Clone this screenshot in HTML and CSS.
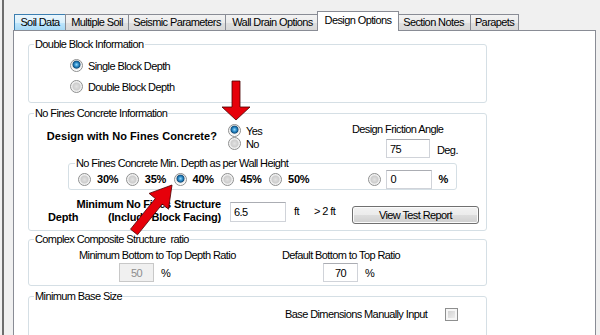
FILE: index.html
```html
<!DOCTYPE html>
<html lang="en">
<head>
<meta charset="utf-8">
<title>Design Options</title>
<link rel="stylesheet" href="styles.css">
</head>
<body>
<div class="window">
  <div class="tabs">
    <div class="tab hot t-soil">Soil Data</div>
    <div class="tab t-multi">Multiple Soil</div>
    <div class="tab t-seis">Seismic Parameters</div>
    <div class="tab t-wall">Wall Drain Options</div>
    <div class="tab selected t-design">Design Options</div>
    <div class="tab t-notes">Section Notes</div>
    <div class="tab t-para">Parapets</div>
  </div>
  <div class="panel">
    <section class="group g-double">
      <div class="group-title">Double Block Information</div>
      <div class="opt-list">
        <div class="opt"><span class="radio checked"></span><span>Single Block Depth</span></div>
        <div class="opt"><span class="radio"></span><span>Double Block Depth</span></div>
      </div>
    </section>

    <section class="group g-nofines">
      <div class="group-title">No Fines Concrete Information</div>
      <div class="row-design">
        <div class="q-label b">Design with No Fines Concrete?</div>
        <div class="yn">
          <div class="yn-opt"><span class="radio checked"></span><span>Yes</span></div>
          <div class="yn-opt"><span class="radio"></span><span>No</span></div>
        </div>
        <div class="friction">
          <div class="friction-label">Design Friction Angle</div>
          <div class="friction-row"><input class="input w-75" type="text" value="75" readonly><span class="unit-deg">Deg.</span></div>
        </div>
      </div>
      <section class="group sub">
        <div class="group-title">No Fines Concrete Min. Depth as per Wall Height</div>
        <div class="pct-row">
          <div class="pct"><span class="radio"></span><span class="b">30%</span></div>
          <div class="pct"><span class="radio"></span><span class="b">35%</span></div>
          <div class="pct"><span class="radio checked"></span><span class="b">40%</span></div>
          <div class="pct"><span class="radio"></span><span class="b">45%</span></div>
          <div class="pct"><span class="radio"></span><span class="b">50%</span></div>
          <div class="pct-custom"><span class="radio"></span><input class="input w-0" type="text" value="0" readonly><span class="b pct-sign">%</span></div>
        </div>
      </section>
      <div class="row-depth">
        <div class="depth-label b">
          <div>Minimum No Fines Structure</div>
          <div class="l2"><span>Depth</span><span>(Include Block Facing)</span></div>
        </div>
        <input class="input w-65" type="text" value="6.5" readonly>
        <span class="unit-ft">ft</span>
        <span class="min-ft">&gt; 2 ft</span>
        <button class="btn" type="button">View Test Report</button>
      </div>
    </section>

    <section class="group g-composite">
      <div class="group-title">Complex Composite Structure&nbsp; ratio</div>
      <div class="comp-row">
        <div class="comp-col1">
          <div class="comp-label">Minimum Bottom to Top Depth Ratio</div>
          <div class="comp-inputs"><input class="input w-ratio disabled" type="text" value="50" disabled><span class="pct-unit">%</span></div>
        </div>
        <div class="comp-col2">
          <div class="comp-label">Default Bottom to Top Ratio</div>
          <div class="comp-inputs"><input class="input w-ratio" type="text" value="70" readonly><span class="pct-unit">%</span></div>
        </div>
      </div>
    </section>

    <section class="group g-base">
      <div class="group-title">Minimum Base Size</div>
      <div class="base-row">
        <span class="base-text">Base Dimensions Manually Input</span>
        <span class="checkbox"></span>
      </div>
    </section>
  </div>
</div>
<svg class="arrows" width="600" height="335" viewBox="0 0 600 335" aria-hidden="true">
  <polygon points="232,81 240,81 240,107 250,107 236,120 222,107 232,107" fill="#e6000a" stroke="#4a0000" stroke-width="0.8"/>
  <polygon points="172,185 168.5,209.2 162.3,204.1 137.5,234.8 130.5,229.2 155.3,198.5 149.1,193.4" fill="#e6000a" stroke="#4a0000" stroke-width="0.8"/>
</svg>
</body>
</html>
```

FILE: styles.css
```css
* { box-sizing: border-box; }
html, body { margin: 0; padding: 0; }
body {
  position: relative;
  width: 600px;
  height: 335px;
  overflow: hidden;
  background: #f0f0f0;
  font-family: "Liberation Sans", Arial, sans-serif;
  font-size: 11px;
  letter-spacing: -0.6px;
  color: #000;
}
.b { font-weight: bold; letter-spacing: -0.2px; }

.window {
  margin-left: 2px;
  border-left: 2px solid #6d6d6d;
  height: 335px;
  padding: 11px 0 0 9px;
  background: #f0f0f0;
}

/* tabs */
.tabs { display: flex; align-items: flex-end; height: 20px; }
.tab {
  position: relative;
  height: 16px;
  margin: 0 -1px 1px 0;
  border: 1px solid #898c95;
  border-bottom: none;
  background: linear-gradient(#f3f3f3, #ebebeb 50%, #dfdfdf 51%, #d8d8d8);
  line-height: 15px;
  text-align: center;
  white-space: nowrap;
}
.tab.hot {
  border-color: #3c7fb1;
  background: linear-gradient(#eaf6fd, #d9f0fc 50%, #bee6fd 51%, #a7d9f5);
}
.t-soil { margin-left: 1px; width: 52px; }
.t-multi { width: 64px; }
.t-seis { width: 98px; }
.t-wall { width: 95px; }
.t-design { width: 82px; }
.t-notes { width: 75px; }
.t-para { width: 49px; }
.tab.selected {
  z-index: 2;
  height: 20px;
  margin: 0 -3px 0 -2px;
  padding-top: 1px;
  background: #fff;
}

/* panel */
.panel {
  margin-top: -1px;
  width: 583px;
  height: 320px;
  border: 1px solid #898c95;
  background: #fff;
  padding: 0 0 0 14px;
  overflow: hidden;
}

/* group boxes */
.group {
  width: 459px;
  border: 1px solid #d5dfe5;
  border-radius: 3px;
}
.group-title {
  display: table;
  margin: -7px 0 0 5px;
  padding: 0 1px;
  height: 12px;
  line-height: 12px;
  background: #fff;
}

/* double block */
.g-double { margin-top: 13px; height: 59px; }
.opt-list { padding: 5px 0 0 41px; }
.opt { display: flex; align-items: center; gap: 5px; height: 21px; }

/* radio / checkbox */
.radio {
  flex: none;
  display: inline-block;
  width: 13px;
  height: 13px;
  border-radius: 50%;
  border: 1px solid #8e8f8f;
  background: radial-gradient(circle at 50% 50%, #e2e2e2 0, #cdcdcd 3.5px, #ececec 4.5px, #fbfbfb 6px);
}
.radio.checked {
  background: radial-gradient(circle at 50% 42%, #9ad9f8 0, #2f8fcc 2px, #0f4f80 3.6px, #d9d9d9 4.3px, #f4f4f4 5px, #fff 6px);
}
.checkbox {
  flex: none;
  display: inline-block;
  width: 13px;
  height: 13px;
  border: 1px solid #8e8f8f;
  box-shadow: inset 0 0 0 2px #f6f6f6;
  background: linear-gradient(135deg, #cbcbcb, #f4f4f4);
}

/* inputs */
.input {
  display: block;
  margin: 0;
  padding: 0 0 0 3px;
  font: inherit;
  letter-spacing: inherit;
  color: #000;
  background: #fff;
  border: 1px solid #d0d3d9;
  border-top-color: #abadb3;
  border-radius: 0;
  outline: none;
}
.input.disabled {
  background: #f0f0f0;
  color: #8d8d8d;
  border-color: #c8c8c8;
}

/* no fines */
.g-nofines { margin-top: 10px; height: 118px; }
.row-design { display: flex; height: 38px; }
.q-label { width: 188px; padding-top: 10px; line-height: 14px; text-align: right; letter-spacing: 0.05px; }
.yn { margin-left: 11px; width: 124px; padding-top: 5px; }
.yn-opt { display: flex; align-items: center; gap: 5px; height: 13px; }
.friction { padding-top: 4px; }
.friction-label { line-height: 13px; }
.friction-row { display: flex; margin: 3px 0 0 34px; }
.w-75 { width: 44px; height: 19px; }
.unit-deg { margin-left: 7px; padding-top: 5px; }

.group.sub { margin: 6px 0 0 39px; width: 389px; height: 27px; }
.sub .group-title { margin-left: 6px; }
.pct-row { display: flex; align-items: center; height: 14px; margin-top: 3px; padding-left: 9px; }
.pct { display: flex; align-items: center; gap: 6px; width: 47.75px; }
.pct-custom { display: flex; align-items: center; margin: 0 8px 0 auto; }
.w-0 { margin-left: 5px; width: 46px; height: 19px; }
.pct-sign { margin-left: 6px; }

.row-depth { display: flex; align-items: flex-start; height: 39px; }
.depth-label { margin-left: 19px; width: 173px; padding-top: 8px; line-height: 13px; text-align: right; }
.l2 { display: flex; justify-content: space-between; }
.w-65 { margin: 12px 0 0 9px; width: 56px; height: 20px; }
.unit-ft { margin: 15px 0 0 8px; width: 20px; line-height: 13px; }
.min-ft { margin-top: 15px; width: 38px; line-height: 13px; }
.btn {
  margin: 16px 0 0;
  padding: 0;
  width: 127px;
  height: 18px;
  font: inherit;
  letter-spacing: inherit;
  color: #000;
  line-height: 15px;
  border: 1px solid #707070;
  border-radius: 3px;
  box-shadow: inset 0 0 0 1px #fbfbfb;
  background: linear-gradient(#f2f2f2, #ebebeb 50%, #dddddd 51%, #cfcfcf);
}

/* composite */
.g-composite { margin-top: 8px; height: 47px; }
.comp-row { display: flex; padding: 4px 0 0 50px; }
.comp-col1 { width: 203px; }
.comp-label { line-height: 13px; }
.comp-inputs { display: flex; align-items: center; margin-top: 1px; }
.comp-col1 .comp-inputs { margin-left: 40px; }
.comp-col2 .comp-inputs { margin-left: 41px; }
.w-ratio { width: 35px; height: 19px; padding: 0; text-align: center; }
.pct-unit { margin-left: 7px; }

/* base */
.g-base { margin-top: 10px; height: 50px; }
.base-row { display: flex; align-items: center; padding: 6px 0 0 256px; height: 19px; }
.base-text { width: 160px; line-height: 13px; }

.arrows { position: absolute; left: 0; top: 0; pointer-events: none; }
```
